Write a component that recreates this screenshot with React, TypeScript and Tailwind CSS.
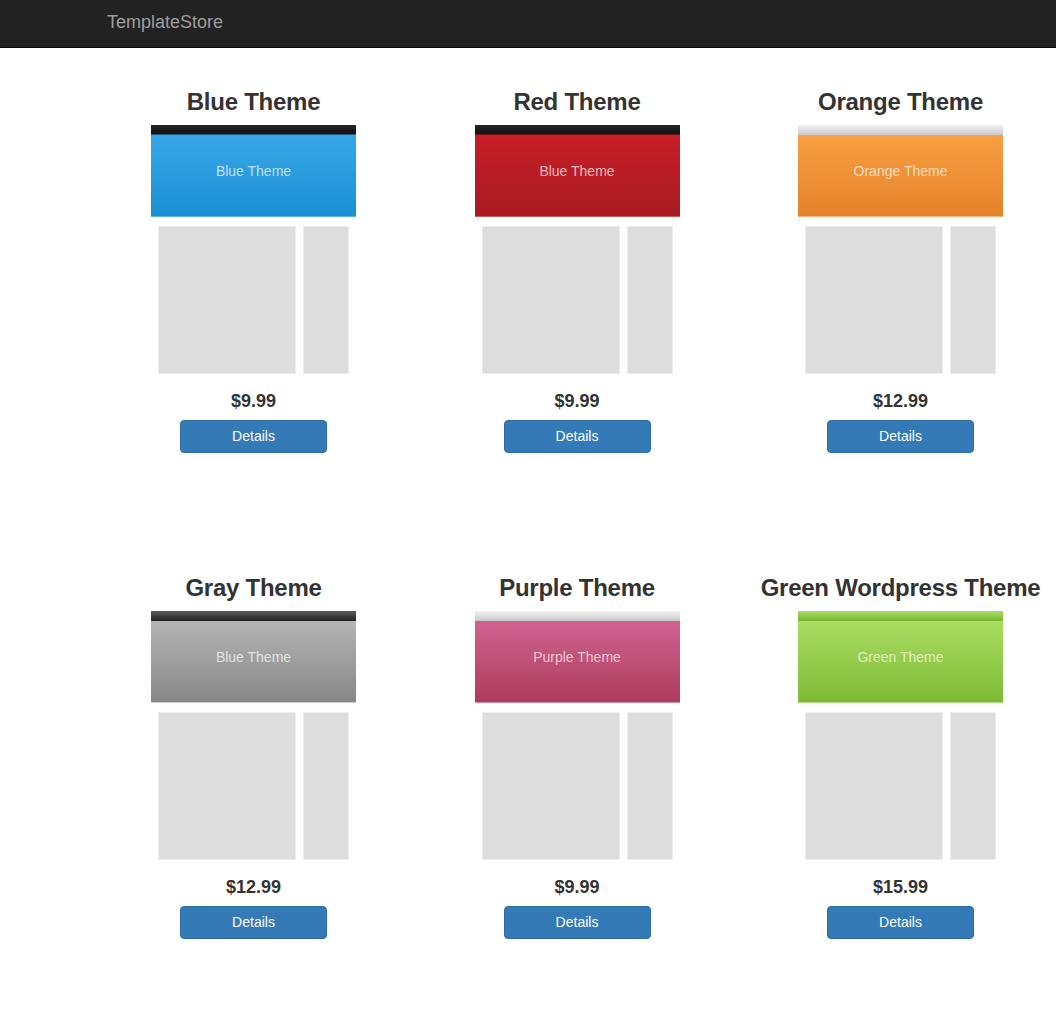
import React from 'react';

interface Theme {
    title: string;
    label: string;
    price: string;
    strip: string;
    bar: string;
}

const themes: Theme[] = [
    {
        title: 'Blue Theme',
        label: 'Blue Theme',
        price: '$9.99',
        strip: 'bg-gradient-to-b from-[#262626] to-[#111111] border-b border-[#1f5f8a]',
        bar: 'bg-gradient-to-b from-[#37a8e6] to-[#1a8fd5] border-b border-[#5ab6ea]',
    },
    {
        title: 'Red Theme',
        label: 'Blue Theme',
        price: '$9.99',
        strip: 'bg-gradient-to-b from-[#262626] to-[#111111] border-b border-[#6e1216]',
        bar: 'bg-gradient-to-b from-[#c81e28] to-[#a81b20] border-b border-[#d0575c]',
    },
    {
        title: 'Orange Theme',
        label: 'Orange Theme',
        price: '$12.99',
        strip: 'bg-gradient-to-b from-[#f2f2f2] to-[#c8c8c8]',
        bar: 'bg-gradient-to-b from-[#f99f42] to-[#e5822a] border-b border-[#f2b27a]',
    },
    {
        title: 'Gray Theme',
        label: 'Blue Theme',
        price: '$12.99',
        strip: 'bg-gradient-to-b from-[#5a5a5a] to-[#222222]',
        bar: 'bg-gradient-to-b from-[#b5b5b5] to-[#878787] border-b border-[#cfcfcf]',
    },
    {
        title: 'Purple Theme',
        label: 'Purple Theme',
        price: '$9.99',
        strip: 'bg-gradient-to-b from-[#f2f2f2] to-[#c8c8c8]',
        bar: 'bg-gradient-to-b from-[#d0628f] to-[#ad3c5d] border-b border-[#d58aa0]',
    },
    {
        title: 'Green Wordpress Theme',
        label: 'Green Theme',
        price: '$15.99',
        strip: 'bg-gradient-to-b from-[#a8dd64] to-[#78b630]',
        bar: 'bg-gradient-to-b from-[#a9dd62] to-[#7fba34] border-b border-[#b3dc8a]',
    },
];

function ThemeCard({ theme }: { theme: Theme }) {
    return (
        <div className="flex flex-col items-center pt-[41px] pb-[81px]">
            <h3 className="text-[24px] leading-[26px] font-bold tracking-[-0.25px] text-[#333333] whitespace-nowrap">{theme.title}</h3>

            {/* Thumbnail */}
            <div className="w-[205px] mt-[10px] bg-white">
                <div className={`h-[10px] ${theme.strip}`} />
                <div className={`h-[82px] flex items-center justify-center pb-[8px] text-[14px] text-white/70 ${theme.bar}`}>
                    {theme.label}
                </div>
                <div className="flex gap-[7px] pl-[7px] pt-[9px] pb-[7px]">
                    <div className="w-[138px] h-[148px] bg-[#dddddd] border border-[#ececec]" />
                    <div className="w-[46px] h-[148px] bg-[#dddddd] border border-[#ececec]" />
                </div>
            </div>

            <h4 className="mt-[10px] text-[18px] leading-[20px] font-bold text-[#333333]">{theme.price}</h4>
            <button className="mt-[9px] w-[147px] h-[33px] rounded-[4px] bg-[#337ab7] border border-[#2e6da4] text-white text-[14px]">
                Details
            </button>
        </div>
    );
}

export default function App() {
    return (
        <div className="min-h-screen bg-white overflow-x-hidden" style={{ fontFamily: '"Liberation Sans", Arial, sans-serif' }}>
            <nav className="h-[48px] bg-[#222222] border-b border-[#080808] flex items-center pl-[107px]">
                <span className="text-[18px] text-[#9d9d9d] leading-[20px] -mt-[4px]">TemplateStore</span>
            </nav>
            <div className="grid grid-cols-[323px_324px_323px] pl-[92px]">
                {themes.map(t => (
                    <ThemeCard key={t.title} theme={t} />
                ))}
            </div>
        </div>
    );
}
